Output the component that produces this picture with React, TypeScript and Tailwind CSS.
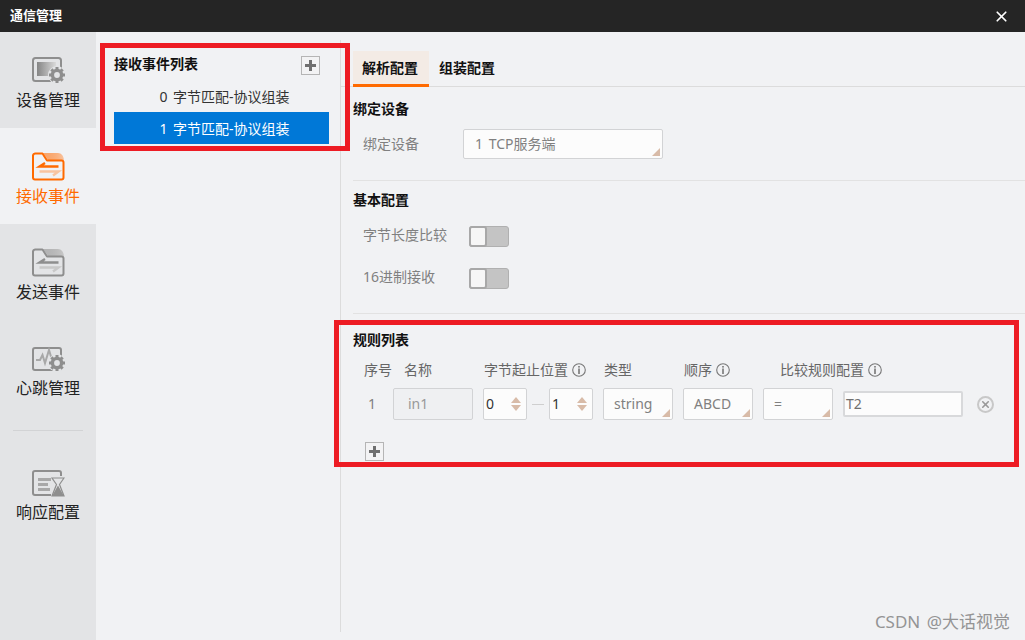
import { X } from "lucide-react";
import type { ReactNode } from "react";

const FONT = "[font-family:'Noto_Sans','Noto_Sans_CJK_SC','Liberation_Sans',sans-serif] [word-spacing:2px]";

const GearBadge = ({ color = "#8e8e8e", x = 26, y = 17 }: { color?: string; x?: number; y?: number }) => (
  <g transform={`translate(${x} ${y})`}>
    <circle r="9" fill="#e3e4e6" />
    <circle r="4.600" fill="none" stroke={color} strokeWidth="3.400" />
    {[0, 45, 90, 135, 180, 225, 270, 315].map((a) => (
      <rect key={a} x="-1.500" y="-8" width="3" height="3" fill={color} transform={`rotate(${a})`} />
    ))}
  </g>
);

const DeviceIcon = () => (
  <svg width="34" height="29" viewBox="0 0 34 29">
    <defs>
      <linearGradient id="dev" x1="0" x2="1" y1="0" y2="0">
        <stop offset="0" stopColor="#858585" />
        <stop offset="1" stopColor="#dadada" />
      </linearGradient>
    </defs>
    <rect x="2" y="2" width="28" height="23" rx="2.500" fill="none" stroke="#8e8e8e" strokeWidth="2" />
    <rect x="6" y="6" width="19" height="14" fill="url(#dev)" />
    <GearBadge x={26} y={19} />
  </svg>
);

const FolderIcon = ({ active, id }: { active?: boolean; id: string }) => {
  const c = active ? "#ff6a00" : "#8e8e8e";
  const soft = active ? "#f8c4a0" : "#c8c8c8";
  return (
    <svg width="34" height="29" viewBox="0 0 34 29">
      <defs>
        <linearGradient id={id} x1="0" x2="1" y1="0" y2="0">
          <stop offset="0" stopColor={c} stopOpacity="0.55" />
          <stop offset="1" stopColor={soft} />
        </linearGradient>
      </defs>
      <path d="M12 1h15c3.500 0 5.500 3 6 7H17z" fill={`url(#${id})`} />
      <path
        d="M2 3.500A2.500 2.500 0 0 1 4.500 1.500H11.500L16 8.500H30.500A2 2 0 0 1 32.500 10.500V25.500A2 2 0 0 1 30.500 27.500H4A2 2 0 0 1 2 25.500z"
        fill="none"
        stroke={c}
        strokeWidth="2"
        strokeLinejoin="round"
      />
      <path d="M14 11 8.500 14.500H27.500" fill="none" stroke={c} strokeWidth="2.400" />
      <path d="M8.500 19.500H27.500L22 23.500" fill="none" stroke={soft} strokeWidth="2.400" />
    </svg>
  );
};

const HeartIcon = () => (
  <svg width="34" height="29" viewBox="0 0 34 29">
    <rect x="2" y="4" width="28" height="22" rx="2" fill="none" stroke="#8e8e8e" strokeWidth="2" />
    <path d="M5 16h4l2.500-5 2.500 8 4-13 3 10 2-3h3" fill="none" stroke="#a8a8a8" strokeWidth="2" />
    <GearBadge x={26} y={19} />
  </svg>
);

const ResponseIcon = () => (
  <svg width="34" height="27" viewBox="0 0 34 27">
    <path d="M20 25H4a2 2 0 0 1-2-2V3a2 2 0 0 1 2-2h24a2 2 0 0 1 2 2v3" fill="none" stroke="#8e8e8e" strokeWidth="2" />
    <rect x="7" y="8" width="13" height="3" fill="#a8a8a8" />
    <rect x="7" y="13" width="10" height="3" fill="#a8a8a8" />
    <rect x="7" y="18" width="12" height="3" fill="#a8a8a8" />
    <path d="M21 8h12l-4.500 6.500L33 26H21l4.500-11.500z" fill="#e3e4e6" stroke="#8e8e8e" strokeWidth="1.200" />
    <path d="M27 15.500 33 26H21z" fill="#8e8e8e" />
  </svg>
);

const NavItem = ({ icon, label, active, tight }: { icon: ReactNode; label: string; active?: boolean; tight?: boolean }) => (
  <div className={`flex h-24 flex-col items-center pt-[24px] ${active ? "bg-[#f1f2f4] text-[#ff6a00]" : "text-[#222]"}`}>
    <div className="h-[29px] w-[34px]">{icon}</div>
    <div className={`text-base leading-[24px] ${tight ? "mt-px" : "mt-[3px]"}`}>{label}</div>
  </div>
);

const PlusButton = () => (
  <div className="flex h-[19px] w-[19px] items-center justify-center border border-[#b5b5b5] bg-[#f3f3f4]">
    <svg width="13" height="13" viewBox="0 0 13 13">
      <path d="M6.500 1v11M1 6.500h11" stroke="#6f6f6f" strokeWidth="3" />
    </svg>
  </div>
);

const Info = () => (
  <svg width="14" height="14" viewBox="0 0 14 14" className="ml-1 shrink-0">
    <circle cx="7" cy="7" r="6.300" fill="none" stroke="#777" strokeWidth="1.100" />
    <rect x="6.200" y="3" width="1.600" height="1.600" fill="#777" />
    <rect x="6.200" y="5.500" width="1.600" height="5.500" fill="#777" />
  </svg>
);

// little triangle in the corner of every dropdown
const Corner = () => (
  <span className="absolute right-[2px] bottom-[2px] h-0 w-0 border-b-[8px] border-l-[8px] border-b-[#d8bba8] border-l-transparent" />
);

const SelectBox = ({ value, className }: { value: string; className: string }) => (
  <div className={`relative flex items-center rounded-[2px] border border-[#d2d3d5] bg-[#fcfcfc] text-sm text-[#808080] ${className}`}>
    {value}
    <Corner />
  </div>
);

const NumberBox = ({ value }: { value: string }) => (
  <div className="relative flex h-8 w-11 items-center rounded-[2px] border border-[#d2d3d5] bg-[#fcfcfc] pl-[2px] text-sm text-[#333]">
    {value}
    <span className="absolute top-[8px] right-[5px] flex flex-col gap-[2px]">
      <span className="h-0 w-0 border-x-[5px] border-b-[6px] border-x-transparent border-b-[#d8bba8]" />
      <span className="h-0 w-0 border-x-[5px] border-t-[6px] border-x-transparent border-t-[#d8bba8]" />
    </span>
  </div>
);

const Toggle = () => (
  <div className="relative h-[21px] w-10 rounded-[3px] border border-[#b0b0b0] bg-[#c4c4c4]">
    <span className="absolute -top-px -left-px h-[21px] w-[18px] rounded-[3px] border-2 border-[#a8a8a8] bg-[#f6f6f6]" />
  </div>
);

const SectionTitle = ({ children }: { children: ReactNode }) => (
  <div className="text-sm leading-5 font-bold text-[#111]">{children}</div>
);

const App = () => {
  return (
    <div className={`relative flex h-[640px] w-[1025px] flex-col overflow-hidden bg-[#f1f2f4] ${FONT}`}>
      {/* Title bar */}
      <div className="flex h-8 shrink-0 items-center justify-between bg-[#252525] pr-[15px] pl-[10px]">
        <span className="text-[13px] font-bold text-white">通信管理</span>
        <X className="h-[17px] w-[17px] text-white" strokeWidth={2.4} />
      </div>

      <div className="flex min-h-0 flex-1">
        {/* Sidebar */}
        <div className="w-24 shrink-0 bg-[#e3e4e6]">
          <NavItem icon={<DeviceIcon />} label="设备管理" />
          <NavItem icon={<FolderIcon active id="folderOn" />} label="接收事件" active />
          <NavItem icon={<FolderIcon id="folderOff" />} label="发送事件" />
          <NavItem icon={<HeartIcon />} label="心跳管理" />
          <div className="mx-[13px] mt-[14px] mb-[15px] h-px bg-[#d2d3d5]" />
          <NavItem icon={<ResponseIcon />} label="响应配置" tight />
        </div>

        {/* Event list */}
        <div className="mt-2 mb-2 w-[245px] shrink-0 border-r border-[#dcdcdc] pt-4 pr-[11px] pl-[18px]">
          <div className="flex h-[19px] items-center justify-between pr-[9px]">
            <span className="-mt-1 text-sm font-bold text-[#111]">接收事件列表</span>
            <PlusButton />
          </div>
          <div className="mt-[5px] flex h-8 items-center justify-center pt-0.5 pl-1.5 text-sm text-[#333]">0 字节匹配-协议组装</div>
          <div className="flex h-8 items-center justify-center bg-[#0078d7] pt-0.5 pl-1.5 text-sm text-white">1 字节匹配-协议组装</div>
        </div>

        {/* Config */}
        <div className="min-w-0 flex-1 pt-[19px]">
          <div className="flex h-9 border-b border-[#dcdcdc] pl-3">
            <div className="flex h-9 w-[76px] items-center justify-center border-b-[3px] border-[#ff6a00] bg-[#f3ebe5] pr-0.5 text-sm font-bold text-[#111]">解析配置</div>
            <div className="flex h-9 w-[76px] items-center justify-center pb-[3px] text-sm font-bold text-[#111]">组装配置</div>
          </div>

          <div className="pl-3">
            <div className="pt-3">
              <SectionTitle>绑定设备</SectionTitle>
            </div>
            <div className="mt-[10px] flex items-center pl-[10px]">
              <span className="w-[100px] text-sm text-[#808080]">绑定设备</span>
              <SelectBox value="1 TCP服务端" className="h-[30px] w-[200px] pl-[11px]" />
            </div>
            <div className="mt-[21px] h-px bg-[#e2e2e2]" />

            <div className="pt-[9px]">
              <SectionTitle>基本配置</SectionTitle>
            </div>
            <div className="mt-[16px] flex items-center pl-[10px]">
              <span className="-mt-1 w-[106px] text-sm text-[#808080]">字节长度比较</span>
              <Toggle />
            </div>
            <div className="mt-[21px] flex items-center pl-[10px]">
              <span className="-mt-1 w-[106px] text-sm text-[#808080]">16进制接收</span>
              <Toggle />
            </div>
            <div className="mt-[24px] h-px bg-[#e2e2e2]" />

            {/* Rule list */}
            <div className="pt-[16px]">
              <SectionTitle>规则列表</SectionTitle>
            </div>
            <div className="mt-[10px] flex h-5 items-center text-sm text-[#666]">
              <span className="ml-[11px] w-10">序号</span>
              <span className="w-20">名称</span>
              <span className="flex w-[120px] items-center">字节起止位置<Info /></span>
              <span className="w-20">类型</span>
              <span className="flex w-24 items-center">顺序<Info /></span>
              <span className="flex items-center">比较规则配置<Info /></span>
            </div>
            <div className="mt-2 flex items-center text-sm text-[#808080]">
              <span className="ml-[15px] w-[25px]">1</span>
              <div className="flex h-8 w-20 items-center rounded-[2px] border border-[#d2d3d5] bg-[#eff0f2] pl-[14px] text-[#999]">in1</div>
              <div className="ml-[10px]"><NumberBox value="0" /></div>
              <div className="mx-[5px] h-px w-3 bg-[#cfcfcf]" />
              <NumberBox value="1" />
              <SelectBox value="string" className="ml-[10px] h-8 w-[70px] pl-[10px]" />
              <SelectBox value="ABCD" className="ml-[10px] h-8 w-[70px] pl-[10px]" />
              <SelectBox value="=" className="ml-[10px] h-8 w-[70px] pl-[10px]" />
              <div className="ml-[10px] flex h-[26px] w-[120px] items-center rounded-[2px] border-2 border-[#d8d9db] bg-[#fcfcfc] pl-[1px] text-[#707070]">T2</div>
              <div className="ml-[14px] flex h-[17px] w-[17px] items-center justify-center rounded-full border-2 border-[#c8c8c8]">
                <X className="h-[11px] w-[11px] text-[#999]" strokeWidth={3.500} />
              </div>
            </div>
            <div className="mt-[22px] ml-3">
              <PlusButton />
            </div>
          </div>
        </div>
      </div>

      {/* Annotation frames drawn over the screenshot */}
      <div className="absolute top-[43px] left-[100px] h-[108px] w-[250px] border-[5px] border-[#ed1c24]" />
      <div className="absolute top-[320px] left-[334px] h-[147px] w-[685px] border-[5px] border-[#ed1c24]" />
      <div className="absolute right-[15px] bottom-[6px] text-[17px] text-[#949494]">CSDN @大话视觉</div>
    </div>
  );
};

export default App;
